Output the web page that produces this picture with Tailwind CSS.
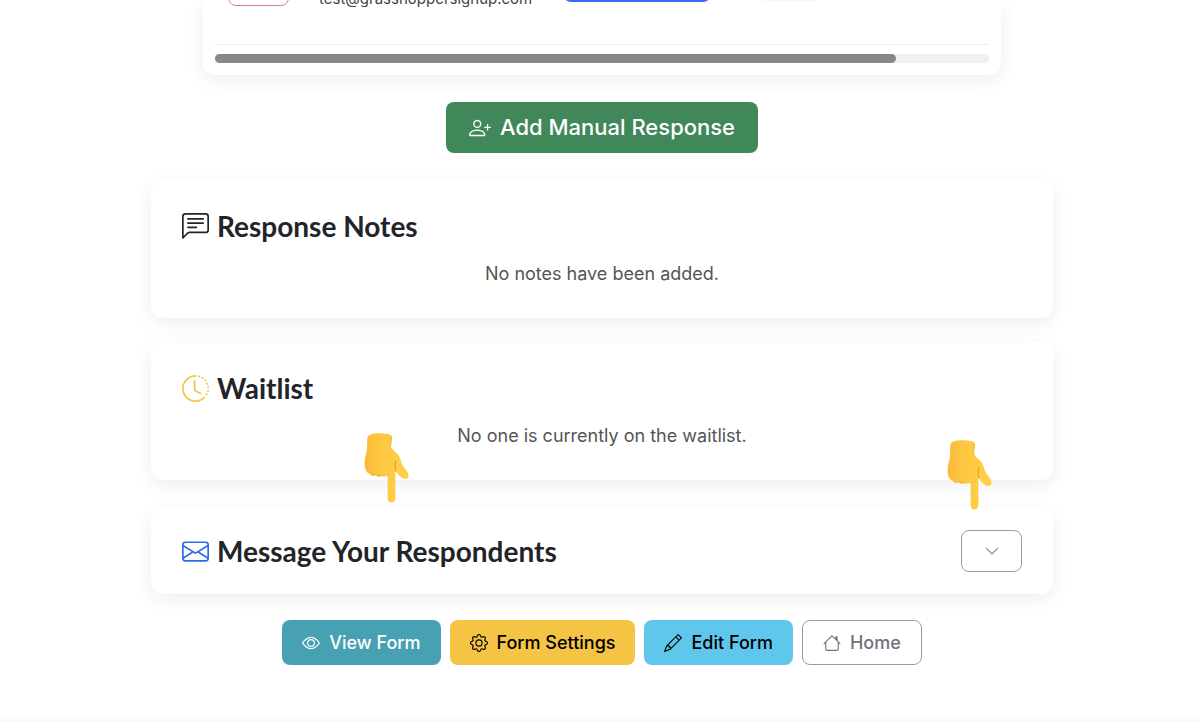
<!DOCTYPE html>
<html lang="en">
<head>
  <meta charset="UTF-8">
  <meta name="viewport" content="width=device-width, initial-scale=1.0">
  <title>Form Responses</title>
  <script src="https://cdn.jsdelivr.net/npm/@tailwindcss/browser@4"></script>
</head>
<body class="bg-white pl-1 font-['Inter',sans-serif] text-[#212529] overflow-x-hidden">

  <!-- Responses table -->
  <section class="max-w-[798px] mx-auto h-[75px] px-3 flex flex-col justify-end rounded-b-xl shadow-[0_5px_18px_rgba(0,0,0,0.07)] overflow-hidden">
    <table class="w-full table-fixed border-b border-[#eeeeee]">
      <tbody>
        <tr class="h-20 align-top">
          <td class="w-[104px] pl-[13px]"><button aria-label="Delete" class="block w-[61px] h-[41px] rounded-lg border border-[#d9808c]"></button></td>
          <td class="w-[244px] pt-[22px] text-[15px] leading-6 text-[#444444]">test@grasshoppersignup.com</td>
          <td class="w-[194px]"><button aria-label="Status" class="block w-[148px] h-[37px] rounded-lg bg-[#3a6cf0]"></button></td>
          <td><span class="block w-[65px] h-[36px] rounded-lg bg-[#f7f7f7]"></span></td>
        </tr>
      </tbody>
    </table>
    <div class="mt-[9px] mb-3 h-[9px] shrink-0 rounded-full bg-[#f0f0f0]">
      <div class="h-full w-[88%] rounded-full bg-[#888888]"></div>
    </div>
  </section>

  <main class="max-w-[902px] mx-auto">

    <div class="flex justify-center mt-[27px]">
      <button class="flex items-center gap-[9px] h-[51px] px-[23px] rounded-lg bg-[#40875a] text-white text-[22px] font-medium">
        <svg class="size-[22px]" viewBox="0 0 16 16" fill="currentColor">
          <path d="M6 8a3 3 0 1 0 0-6 3 3 0 0 0 0 6m2-3a2 2 0 1 1-4 0 2 2 0 0 1 4 0m4 8c0 1-1 1-1 1H1s-1 0-1-1 1-4 6-4 6 3 6 4m-1-.004c-.001-.246-.154-.986-.832-1.664C9.516 10.68 8.289 10 6 10s-3.516.68-4.168 1.332c-.678.678-.83 1.418-.832 1.664z"/>
          <path d="M13.5 5a.5.5 0 0 1 .5.5V7h1.5a.5.5 0 0 1 0 1H14v1.5a.5.5 0 0 1-1 0V8h-1.5a.5.5 0 0 1 0-1H13V5.5a.5.5 0 0 1 .5-.5"/>
        </svg>
        Add Manual Response
      </button>
    </div>

    <!-- Response Notes -->
    <section class="mt-[27px] px-[31px] py-[30px] rounded-xl shadow-[0_5px_18px_rgba(0,0,0,0.07)]">
      <h2 class="flex items-center gap-2 font-['Lato',sans-serif] text-[28px] leading-8 font-bold">
        <svg class="size-[27px]" viewBox="0 0 16 16" fill="currentColor">
          <path d="M14 1a1 1 0 0 1 1 1v8a1 1 0 0 1-1 1H4.414A2 2 0 0 0 3 11.586l-2 2V2a1 1 0 0 1 1-1zM2 0a2 2 0 0 0-2 2v12.793a.5.5 0 0 0 .854.353l2.853-2.853A1 1 0 0 1 4.414 12H14a2 2 0 0 0 2-2V2a2 2 0 0 0-2-2z"/>
          <path d="M3 3.5a.5.5 0 0 1 .5-.5h9a.5.5 0 0 1 0 1h-9a.5.5 0 0 1-.5-.5M3 6a.5.5 0 0 1 .5-.5h9a.5.5 0 0 1 0 1h-9A.5.5 0 0 1 3 6m0 2.5a.5.5 0 0 1 .5-.5h5a.5.5 0 0 1 0 1h-5a.5.5 0 0 1-.5-.5"/>
        </svg>
        Response Notes
      </h2>
      <p class="mt-[18px] text-center text-lg text-[#555555]">No notes have been added.</p>
    </section>

    <!-- Waitlist -->
    <section class="relative mt-6 px-[31px] py-[30px] rounded-xl shadow-[0_5px_18px_rgba(0,0,0,0.07)]">
      <h2 class="flex items-center gap-2 font-['Lato',sans-serif] text-[28px] leading-8 font-bold">
        <svg class="size-[27px] text-[#f5c444]" viewBox="0 0 16 16" fill="currentColor">
          <path d="M8.515 1.019A7 7 0 0 0 8 1V0a8 8 0 0 1 .589.022zm2.004.45a7 7 0 0 0-.985-.299l.219-.976q.576.129 1.126.342zm1.37.71a7 7 0 0 0-.439-.27l.493-.87a8 8 0 0 1 .979.654l-.615.789a7 7 0 0 0-.418-.302zm1.834 1.79a7 7 0 0 0-.653-.796l.724-.69q.406.429.747.91zm.744 1.352a7 7 0 0 0-.214-.468l.893-.45a8 8 0 0 1 .45 1.088l-.95.313a7 7 0 0 0-.179-.483m.53 2.507a7 7 0 0 0-.1-1.025l.985-.17q.1.58.116 1.17zm-.131 1.538q.05-.254.081-.51l.993.123a8 8 0 0 1-.23 1.155l-.964-.267q.069-.247.12-.501m-.952 2.379q.276-.436.486-.908l.914.405q-.24.54-.555 1.038zm-.964 1.205q.183-.183.35-.378l.758.653a8 8 0 0 1-.401.432z"/>
          <path d="M8 1a7 7 0 1 0 4.95 11.95l.707.707A8.001 8.001 0 1 1 8 0z"/>
          <path d="M7.5 3a.5.5 0 0 1 .5.5v5.21l3.248 1.856a.5.5 0 0 1-.496.868l-3.5-2A.5.5 0 0 1 7 9V3.5a.5.5 0 0 1 .5-.5"/>
        </svg>
        Waitlist
      </h2>
      <p class="mt-[18px] text-center text-lg text-[#555555]">No one is currently on the waitlist.</p>

      <!-- Pointing hands -->
      <svg class="absolute z-10 left-[213px] top-[91px] w-[45px] h-[70px]" viewBox="0 0 135 210">
        <defs>
          <linearGradient id="hand" x1="0" y1="0" x2="1" y2="0">
            <stop offset="0" stop-color="#f8b83a"/>
            <stop offset="0.3" stop-color="#fec63f"/>
            <stop offset="1" stop-color="#ffd04a"/>
          </linearGradient>
        </defs>
        <g id="hand-shape">
          <path fill="url(#hand)" d="M10 18C10 5 25 1 45 1C65 1 84 4 84 12C85 22 79 30 81 41C84 52 104 60 108 75C112 92 118 102 127 112C135 122 136 134 128 137C118 140 110 132 104 126C100 122 97 118 94 112V196C94 213 71 213 71 196V124C67 131 59 134 53 128C47 133 38 132 34 126C28 130 21 129 18 123C5 119 2 106 2 90C1 72 9 62 9 48Z"/>
          <path fill="none" stroke="#d99528" stroke-width="3" stroke-linecap="round" d="M95 84C93 93 93 103 95 114"/>
          <path fill="none" stroke="#e5a52f" stroke-width="2" stroke-linecap="round" d="M82 13C84 23 79 30 80 40M71 124V130M22 125Q31 129 35 125Q44 132 54 127"/>
        </g>
      </svg>
      <svg class="absolute z-10 right-[61px] top-[98px] w-[45px] h-[70px]" viewBox="0 0 135 210"><use href="#hand-shape"/></svg>
    </section>

    <!-- Message Your Respondents -->
    <section class="flex items-center justify-between mt-7 px-[31px] py-[22px] rounded-xl shadow-[0_5px_18px_rgba(0,0,0,0.07)]">
      <h2 class="flex items-center gap-2 font-['Lato',sans-serif] text-[28px] leading-8 font-bold">
        <svg class="size-[27px] text-[#2f6be6]" viewBox="0 0 16 16" fill="currentColor">
          <path d="M0 4a2 2 0 0 1 2-2h12a2 2 0 0 1 2 2v8a2 2 0 0 1-2 2H2a2 2 0 0 1-2-2zm2-1a1 1 0 0 0-1 1v.217l7 4.2 7-4.2V4a1 1 0 0 0-1-1zm13 2.383-4.708 2.825L15 11.105zm-.034 6.876-5.64-3.471L8 9.583l-1.326-.795-5.64 3.47A1 1 0 0 0 2 13h12a1 1 0 0 0 .966-.741M1 11.105l4.708-2.897L1 5.383z"/>
        </svg>
        Message Your Respondents
      </h2>
      <button aria-label="Expand" class="flex items-center justify-center w-[61px] h-[42px] rounded-lg border border-[#999da1] text-[#6c757d]">
        <svg class="size-4" viewBox="0 0 16 16" fill="currentColor"><path d="M1.646 4.646a.5.5 0 0 1 .708 0L8 10.293l5.646-5.647a.5.5 0 0 1 .708.708l-6 6a.5.5 0 0 1-.708 0l-6-6a.5.5 0 0 1 0-.708"/></svg>
      </button>
    </section>

    <!-- Actions -->
    <nav class="flex justify-center gap-[9px] mt-[26px] text-lg font-medium">
      <a href="#" class="flex items-center gap-[9px] h-[45px] px-5 rounded-lg bg-[#48a0b3] text-white">
        <svg class="size-[18px]" viewBox="0 0 16 16" fill="currentColor">
          <path d="M16 8s-3-5.5-8-5.5S0 8 0 8s3 5.5 8 5.5S16 8 16 8M1.173 8a13 13 0 0 1 1.66-2.043C4.12 4.668 5.88 3.5 8 3.5s3.879 1.168 5.168 2.457A13 13 0 0 1 14.828 8q-.086.13-.195.288c-.335.48-.83 1.12-1.465 1.755C11.879 11.332 10.119 12.5 8 12.5s-3.879-1.168-5.168-2.457A13 13 0 0 1 1.172 8z"/>
          <path d="M8 5.5a2.5 2.5 0 1 0 0 5 2.5 2.5 0 0 0 0-5M4.5 8a3.5 3.5 0 1 1 7 0 3.5 3.5 0 0 1-7 0"/>
        </svg>
        View Form
      </a>
      <a href="#" class="flex items-center gap-[9px] h-[45px] px-5 rounded-lg bg-[#f5c444] text-black">
        <svg class="size-[18px]" viewBox="0 0 16 16" fill="currentColor">
          <path d="M8 4.754a3.246 3.246 0 1 0 0 6.492 3.246 3.246 0 0 0 0-6.492M5.754 8a2.246 2.246 0 1 1 4.492 0 2.246 2.246 0 0 1-4.492 0"/>
          <path d="M9.796 1.343c-.527-1.79-3.065-1.79-3.592 0l-.094.319a.873.873 0 0 1-1.255.52l-.292-.16c-1.64-.892-3.433.902-2.54 2.541l.159.292a.873.873 0 0 1-.52 1.255l-.319.094c-1.79.527-1.79 3.065 0 3.592l.319.094a.873.873 0 0 1 .52 1.255l-.16.292c-.892 1.64.901 3.434 2.541 2.54l.292-.159a.873.873 0 0 1 1.255.52l.094.319c.527 1.79 3.065 1.79 3.592 0l.094-.319a.873.873 0 0 1 1.255-.52l.292.16c1.64.893 3.434-.902 2.54-2.541l-.159-.292a.873.873 0 0 1 .52-1.255l.319-.094c1.79-.527 1.79-3.065 0-3.592l-.319-.094a.873.873 0 0 1-.52-1.255l.16-.292c.893-1.64-.902-3.433-2.541-2.54l-.292.159a.873.873 0 0 1-1.255-.52zm-2.633.283c.246-.835 1.428-.835 1.674 0l.094.319a1.873 1.873 0 0 0 2.693 1.115l.291-.16c.764-.415 1.6.42 1.184 1.185l-.159.292a1.873 1.873 0 0 0 1.116 2.692l.318.094c.835.246.835 1.428 0 1.674l-.319.094a1.873 1.873 0 0 0-1.115 2.693l.16.291c.415.764-.42 1.6-1.185 1.184l-.291-.159a1.873 1.873 0 0 0-2.693 1.116l-.094.318c-.246.835-1.428.835-1.674 0l-.094-.319a1.873 1.873 0 0 0-2.692-1.115l-.292.16c-.764.415-1.6-.42-1.184-1.185l.159-.291A1.873 1.873 0 0 0 1.945 8.93l-.319-.094c-.835-.246-.835-1.428 0-1.674l.319-.094A1.873 1.873 0 0 0 3.06 4.377l-.16-.292c-.415-.764.42-1.6 1.185-1.184l.292.159a1.873 1.873 0 0 0 2.692-1.115z"/>
        </svg>
        Form Settings
      </a>
      <a href="#" class="flex items-center gap-[9px] h-[45px] px-5 rounded-lg bg-[#5fc6ec] text-black">
        <svg class="size-[18px]" viewBox="0 0 16 16" fill="currentColor"><path d="M12.146.146a.5.5 0 0 1 .708 0l3 3a.5.5 0 0 1 0 .708l-10 10a.5.5 0 0 1-.168.11l-5 2a.5.5 0 0 1-.65-.65l2-5a.5.5 0 0 1 .11-.168zM11.207 2.5 13.5 4.793 14.793 3.5 12.5 1.207zm1.586 3L10.5 3.207 4 9.707V10h.5a.5.5 0 0 1 .5.5v.5h.5a.5.5 0 0 1 .5.5v.5h.293zm-9.761 5.175-.106.106-1.528 3.821 3.821-1.528.106-.106A.5.5 0 0 1 5 12.5V12h-.5a.5.5 0 0 1-.5-.5V11h-.5a.5.5 0 0 1-.468-.325"/></svg>
        Edit Form
      </a>
      <a href="#" class="flex items-center gap-[9px] h-[45px] px-5 rounded-lg border border-[#999da1] text-[#6c757d]">
        <svg class="size-[18px]" viewBox="0 0 16 16" fill="currentColor"><path d="M8.707 1.5a1 1 0 0 0-1.414 0L.646 8.146a.5.5 0 0 0 .708.708L2 8.207V13.5A1.5 1.5 0 0 0 3.5 15h9a1.5 1.5 0 0 0 1.5-1.5V8.207l.646.647a.5.5 0 0 0 .708-.708L13 5.793V2.5a.5.5 0 0 0-.5-.5h-1a.5.5 0 0 0-.5.5v1.293zM13 7.207V13.5a.5.5 0 0 1-.5.5h-9a.5.5 0 0 1-.5-.5V7.207l5-5z"/></svg>
        Home
      </a>
    </nav>
  </main>

  <footer class="-ml-1 mt-[52px] h-[5px] bg-[#f9f9f9]"></footer>
</body>
</html>
